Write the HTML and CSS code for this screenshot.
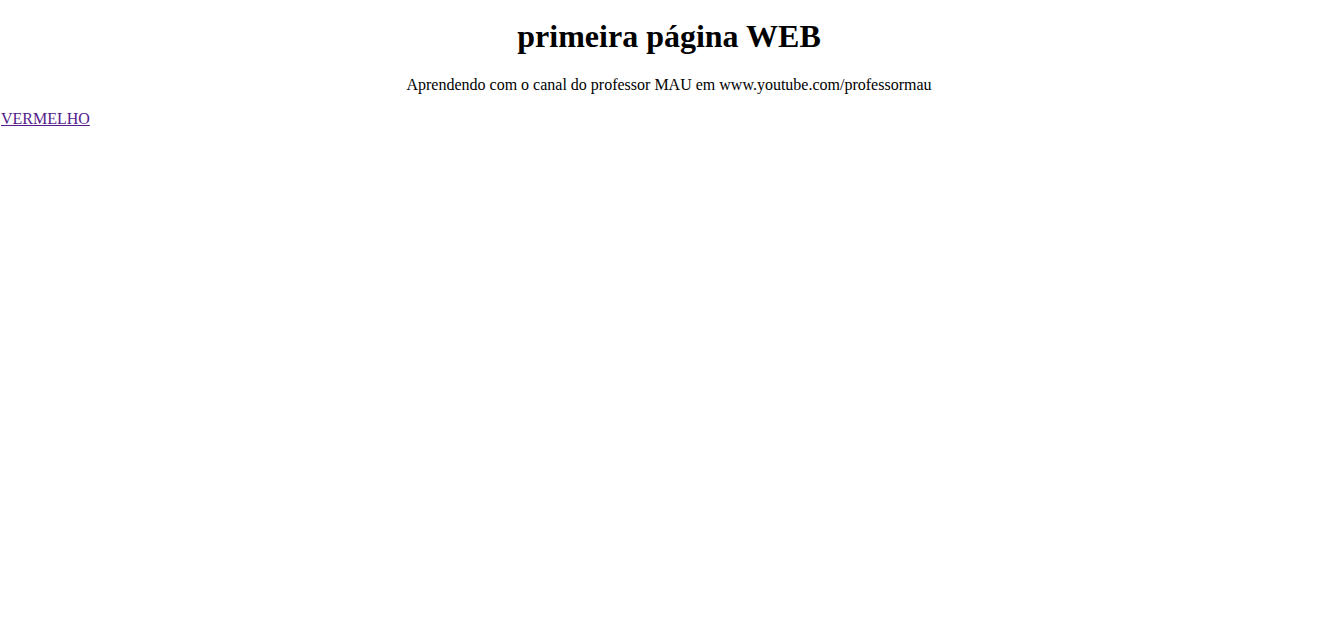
FILE: index.html
```html
<!DOCTYPE html>
<html lang="pt-BR">
<head>
<meta charset="utf-8">
<title>primeira página WEB</title>
<link rel="stylesheet" href="styles.css">
</head>
<body class="page">
<h1 class="title">primeira página WEB</h1>
<p class="subtitle">Aprendendo com o canal do professor MAU em www.youtube.com/professormau</p>
<a class="link" href="#">VERMELHO</a>
</body>
</html>
```
FILE: styles.css
```css
.page {
  margin: 0 6px 0 1px;
  font-family: "Liberation Serif", "Times New Roman", serif;
  font-size: 16px;
  color: #000;
  background: #fff;
}
.title {
  text-align: center;
  font-size: 32px;
  margin: 18px 0 21px;
}
.subtitle {
  text-align: center;
  margin: 16px 0;
}
.link {
  color: #551a8b;
}
```
